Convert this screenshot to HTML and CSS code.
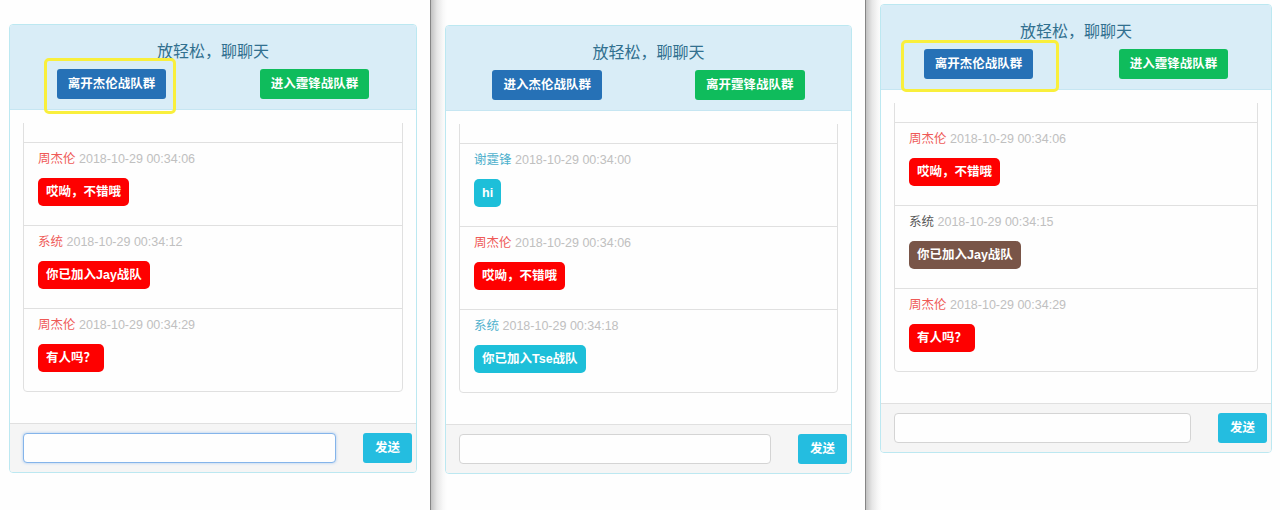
FILE: index.html
```html
<!DOCTYPE html>
<html lang="zh-CN">
<head>
<meta charset="utf-8">
<title>聊天</title>
<link rel="stylesheet" href="styles.css">
</head>
<body>
<div class="screen">
  <section class="pane pane-1">
    <div class="card">
      <div class="card-head">
        <h3 class="title">放轻松，聊聊天</h3>
        <div class="actions">
          <div class="action-cell"><button class="btn btn-blue">离开杰伦战队群</button></div>
          <div class="action-cell"><button class="btn btn-green">进入霆锋战队群</button></div>
        </div>
      </div>
      <div class="card-body">
        <div class="messages">
          <ul class="msg-list">
            <li class="msg msg-earlier"></li>
            <li class="msg"><div class="meta"><span class="who who-red">周杰伦</span> <span class="when">2018-10-29 00:34:06</span></div><span class="bubble bubble-red">哎呦，不错哦</span></li>
            <li class="msg"><div class="meta"><span class="who who-red">系统</span> <span class="when">2018-10-29 00:34:12</span></div><span class="bubble bubble-red">你已加入Jay战队</span></li>
            <li class="msg"><div class="meta"><span class="who who-red">周杰伦</span> <span class="when">2018-10-29 00:34:29</span></div><span class="bubble bubble-red">有人吗？</span></li>
          </ul>
        </div>
      </div>
      <div class="card-foot">
        <input class="msg-input is-focused" type="text">
        <button class="btn btn-send">发送</button>
      </div>
      <div class="highlight hl-pane-1"></div>
    </div>
  </section>
  <div class="divider"></div>
  <section class="pane pane-2">
    <div class="card">
      <div class="card-head">
        <h3 class="title">放轻松，聊聊天</h3>
        <div class="actions">
          <div class="action-cell"><button class="btn btn-blue">进入杰伦战队群</button></div>
          <div class="action-cell"><button class="btn btn-green">离开霆锋战队群</button></div>
        </div>
      </div>
      <div class="card-body">
        <div class="messages">
          <ul class="msg-list">
            <li class="msg msg-earlier"></li>
            <li class="msg"><div class="meta"><span class="who who-cyan">谢霆锋</span> <span class="when">2018-10-29 00:34:00</span></div><span class="bubble bubble-cyan">hi</span></li>
            <li class="msg"><div class="meta"><span class="who who-red">周杰伦</span> <span class="when">2018-10-29 00:34:06</span></div><span class="bubble bubble-red">哎呦，不错哦</span></li>
            <li class="msg"><div class="meta"><span class="who who-cyan">系统</span> <span class="when">2018-10-29 00:34:18</span></div><span class="bubble bubble-cyan">你已加入Tse战队</span></li>
          </ul>
        </div>
      </div>
      <div class="card-foot">
        <input class="msg-input" type="text">
        <button class="btn btn-send">发送</button>
      </div>
    </div>
  </section>
  <div class="divider"></div>
  <section class="pane pane-3">
    <div class="card">
      <div class="card-head">
        <h3 class="title">放轻松，聊聊天</h3>
        <div class="actions">
          <div class="action-cell"><button class="btn btn-blue">离开杰伦战队群</button></div>
          <div class="action-cell"><button class="btn btn-green">进入霆锋战队群</button></div>
        </div>
      </div>
      <div class="card-body">
        <div class="messages">
          <ul class="msg-list">
            <li class="msg msg-earlier"></li>
            <li class="msg"><div class="meta"><span class="who who-red">周杰伦</span> <span class="when">2018-10-29 00:34:06</span></div><span class="bubble bubble-red">哎呦，不错哦</span></li>
            <li class="msg"><div class="meta"><span class="who who-gray">系统</span> <span class="when">2018-10-29 00:34:15</span></div><span class="bubble bubble-brown">你已加入Jay战队</span></li>
            <li class="msg"><div class="meta"><span class="who who-red">周杰伦</span> <span class="when">2018-10-29 00:34:29</span></div><span class="bubble bubble-red">有人吗？</span></li>
          </ul>
        </div>
      </div>
      <div class="card-foot">
        <input class="msg-input" type="text">
        <button class="btn btn-send">发送</button>
      </div>
      <div class="highlight hl-pane-3"></div>
    </div>
  </section>
</div>
</body>
</html>
```

FILE: styles.css
```css
* { box-sizing: border-box; }

html, body {
  margin: 0;
  padding: 0;
  background: #fefefe;
  font-family: "Liberation Sans", "Noto Sans CJK SC", sans-serif;
}

.screen {
  display: flex;
  width: 1280px;
  height: 510px;
  overflow: hidden;
}

.pane {
  height: 510px;
  flex-shrink: 0;
}

.pane-1 {
  width: 430px;
  padding: 24px 0 0 9px;
  background: #fefefe;
}

.pane-2 {
  width: 434px;
  padding: 25px 0 0 14px;
  background: linear-gradient(to right, #c2c2c2 0, #e6e6e6 6px, #f8f8f8 12px, #fefefe 16px);
}

.pane-3 {
  width: 414px;
  padding: 4px 0 0 14px;
  background: linear-gradient(to right, #c2c2c2 0, #e6e6e6 6px, #f8f8f8 12px, #fefefe 16px);
}

.divider {
  width: 1px;
  height: 510px;
  flex-shrink: 0;
  background: #858585;
}

.card {
  position: relative;
  width: 408px;
  border: 1px solid #bce8f1;
  border-radius: 4px;
  background: #fefefe;
}

.pane-2 .card { width: 407px; }
.pane-3 .card { width: 392px; }

.card-head {
  background: #d9edf7;
  border-bottom: 1px solid #c6e6f2;
  border-radius: 3px 3px 0 0;
  padding: 16px 0 10px;
}

.title {
  margin: 0;
  text-align: center;
  font-size: 16px;
  line-height: 22px;
  font-weight: normal;
  color: #31708f;
}

.actions {
  display: flex;
  margin-top: 6px;
}

.action-cell {
  flex: 1;
  display: flex;
  justify-content: center;
}

.btn {
  padding: 6px 11px;
  border: none;
  border-radius: 3px;
  color: #fff;
  font-family: inherit;
  font-size: 12.5px;
  font-weight: bold;
  line-height: 18px;
  cursor: pointer;
}

.btn-blue { background: #2671b6; }
.btn-green { background: #0fbc5c; }
.btn-send {
  width: 49px;
  padding: 6px 0;
  background: #24bde0;
  flex-shrink: 0;
}

.card-body {
  padding: 13px 13px 31px;
}

.messages {
  height: 269px;
  overflow: hidden;
  display: flex;
  flex-direction: column;
  justify-content: flex-end;
}

.msg-list {
  flex-shrink: 0;
  list-style: none;
  margin: 0;
  padding: 0;
  border: 1px solid #e0e0e0;
  border-radius: 4px;
  background: #fefefe;
}

.msg {
  height: 82px;
  padding: 8px 14px 0;
}

.msg + .msg {
  height: 83px;
  border-top: 1px solid #e0e0e0;
}

.meta {
  height: 17px;
  line-height: 17px;
  font-size: 12.5px;
  white-space: nowrap;
}

.who-red { color: #ef5a57; }
.who-cyan { color: #4fb1cd; }
.who-gray { color: #555; }
.when { color: #c0c0c0; }

.bubble {
  display: inline-block;
  margin-top: 10px;
  height: 28px;
  line-height: 28px;
  padding: 0 8px;
  border-radius: 5px;
  color: #fff;
  font-size: 12.5px;
  font-weight: bold;
  white-space: nowrap;
}

.bubble-red { background: #fe0000; }
.bubble-cyan { background: #1dbfd9; }
.bubble-brown { background: #795548; }

.card-foot {
  display: flex;
  gap: 27px;
  padding: 9px 4px 9px 13px;
  background: #f5f5f5;
  border-top: 1px solid #e0e0e0;
  border-radius: 0 0 3px 3px;
}

.msg-input {
  flex: 1;
  min-width: 0;
  height: 30px;
  margin: 0;
  border: 1px solid #d4d4d4;
  border-radius: 4px;
  background: #fefefe;
  outline: none;
  font-family: inherit;
  font-size: 13px;
}

.msg-input.is-focused {
  border-color: #84b4ea;
  box-shadow: 0 0 3px rgba(102, 163, 233, 0.55);
}

.highlight {
  position: absolute;
  border: 3px solid #f9ef3c;
  border-radius: 5px;
  pointer-events: none;
}

.hl-pane-1 {
  left: 34px;
  top: 33px;
  width: 132px;
  height: 56px;
}

.hl-pane-3 {
  left: 20px;
  top: 35px;
  width: 158px;
  height: 52px;
}
```
